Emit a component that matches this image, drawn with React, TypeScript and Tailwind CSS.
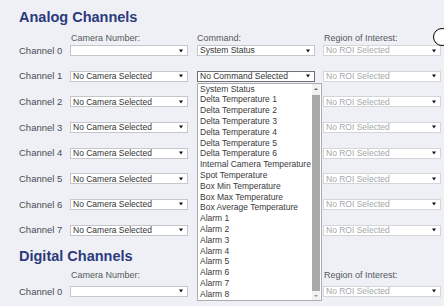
import React from "react";

type SelectProps = {
  value: string;
  muted?: boolean;
  focused?: boolean;
};

const commandOptions = [
  "System Status",
  "Delta Temperature 1",
  "Delta Temperature 2",
  "Delta Temperature 3",
  "Delta Temperature 4",
  "Delta Temperature 5",
  "Delta Temperature 6",
  "Internal Camera Temperature",
  "Spot Temperature",
  "Box Min Temperature",
  "Box Max Temperature",
  "Box Average Temperature",
  "Alarm 1",
  "Alarm 2",
  "Alarm 3",
  "Alarm 4",
  "Alarm 5",
  "Alarm 6",
  "Alarm 7",
  "Alarm 8",
];

function Select({ value, muted, focused }: SelectProps) {
  const border = focused ? "border-[#6f7378]" : muted ? "border-[#d3d5d9]" : "border-[#c3c6cb]";
  return (
    <div className={`flex items-center justify-between h-[11px] w-[118px] bg-white border ${border} pl-[2px] pr-[4px]`}>
      <span className={`text-[8.5px] leading-none whitespace-nowrap ${muted ? "text-[#a5a7aa]" : "text-[#333]"}`}>{value}</span>
      <svg width="4" height="4" viewBox="0 0 4 4">
        <path d="M0 0.5H4L2 3.5Z" fill="#111" />
      </svg>
    </div>
  );
}

// open dropdown of the Channel 1 command select
function CommandList() {
  return (
    <div className="absolute left-0 top-[12px] z-10 w-[125px] h-[218px] bg-white border border-[#a9acb0]">
      <div className="flex flex-col pr-[10px]">
        {commandOptions.map(opt => (
          <div key={opt} className="h-[10.8px] leading-[10.8px] pl-[2px] text-[8.5px] text-[#3a3a3a] whitespace-nowrap">
            {opt}
          </div>
        ))}
      </div>
      {/* scrollbar */}
      <div className="absolute right-px top-0 bottom-0 w-[8px] bg-[#f1f1f1]">
        <div className="absolute left-[2px] top-[4px] w-0 h-0 border-l-[2px] border-r-[2px] border-b-[2px] border-l-transparent border-r-transparent border-b-[#666]" />
        <div className="absolute left-0 right-0 top-[11px] bottom-[9px] bg-[#a9a9a9]" />
        <div className="absolute left-[2px] bottom-[3px] w-0 h-0 border-l-[2px] border-r-[2px] border-t-[2px] border-l-transparent border-r-transparent border-t-[#999]" />
      </div>
    </div>
  );
}

function HeaderRow({ command }: { command: boolean }) {
  return (
    <div className="grid grid-cols-[51px_127px_126px_118px] h-[10px] text-[9px] leading-[10px] text-[#55585c]">
      <div />
      <div className="pl-px">Camera Number:</div>
      <div>{command ? "Command:" : ""}</div>
      <div className="pl-px">Region of Interest:</div>
    </div>
  );
}

function ChannelRow({ index, digital }: { index: number; digital?: boolean }) {
  const camera = index === 0 ? "" : "No Camera Selected";
  // rows below the open list have their command select covered by it
  const covered = digital || index > 1;
  const command = index === 0 ? "System Status" : "No Command Selected";
  return (
    <div className="grid grid-cols-[51px_127px_126px_118px] items-center h-[11px]">
      <div className="text-[9.5px] leading-none text-[#4b4e52] whitespace-nowrap">Channel {index}</div>
      <Select value={camera} />
      <div className="relative h-[11px]">
        {!covered && <Select value={command} focused={index === 1} />}
        {index === 1 && !digital && <CommandList />}
      </div>
      <Select value="No ROI Selected" muted />
    </div>
  );
}

export default function App() {
  const analog = [0, 1, 2, 3, 4, 5, 6, 7];

  return (
    <div className="relative min-h-[306px] overflow-hidden bg-[#eef0f5] pl-[19px] pt-[9px] font-['Liberation_Sans',Arial,sans-serif]">
      <h2 className="h-[17px] text-[14.5px] leading-[17px] font-bold text-[#2c3a7c]">Analog Channels</h2>

      <div className="mt-[7px]">
        <HeaderRow command />
      </div>

      <div className="mt-[2px] flex flex-col gap-[14.67px]">
        {analog.map(i => (
          <ChannelRow key={i} index={i} />
        ))}
      </div>

      <h2 className="mt-[12px] h-[17px] text-[14.5px] leading-[17px] font-bold text-[#2c3a7c]">Digital Channels</h2>

      <div className="mt-[5.6px]">
        <HeaderRow command={false} />
      </div>
      <div className="mt-[5.7px]">
        <ChannelRow index={0} digital />
      </div>

      {/* busy indicator at the edge */}
      <div className="absolute left-[433px] top-[28px] w-[18px] h-[18px] rounded-full border-[1.5px] border-black bg-white" />
    </div>
  );
}
